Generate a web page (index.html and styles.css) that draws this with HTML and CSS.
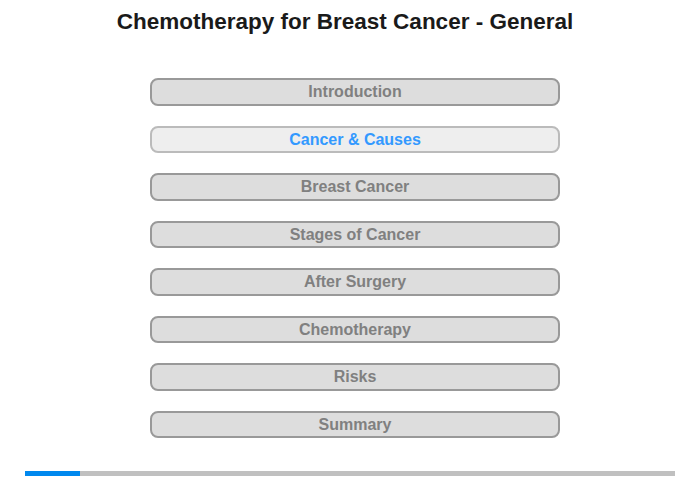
FILE: index.html
```html
<!DOCTYPE html>
<html>
<head>
<meta charset="utf-8">
<link rel="stylesheet" href="styles.css">
</head>
<body>
<div class="page">
  <h1 class="title">Chemotherapy for Breast Cancer - General</h1>
  <nav class="menu">
    <div class="item">Introduction</div>
    <div class="item active">Cancer &amp; Causes</div>
    <div class="item">Breast Cancer</div>
    <div class="item">Stages of Cancer</div>
    <div class="item">After Surgery</div>
    <div class="item">Chemotherapy</div>
    <div class="item">Risks</div>
    <div class="item">Summary</div>
  </nav>
  <div class="progress"><div class="progress-fill"></div></div>
</div>
</body>
</html>
```
FILE: styles.css
```css
html, body {
  margin: 0;
  padding: 0;
  background: #fff;
}
.page {
  width: 700px;
  height: 480px;
  font-family: "Liberation Sans", Arial, sans-serif;
  display: flex;
  flex-direction: column;
  align-items: center;
}
.title {
  margin: 8px 10px 0 0;
  font-size: 22.5px;
  font-weight: bold;
  color: #1a1a1a;
  line-height: 27px;
  text-align: center;
}
.menu {
  margin: 43px 0 0 10px;
  display: flex;
  flex-direction: column;
  gap: 20px;
  width: 410px;
}
.item {
  box-sizing: border-box;
  height: 27.5px;
  border: 2px solid #999;
  border-radius: 8px;
  background: #ddd;
  color: #808080;
  font-size: 16px;
  font-weight: bold;
  text-align: center;
  line-height: 23px;
}
.item.active {
  background: #eee;
  border-color: #bbb;
  color: #3399ff;
}
.progress {
  margin-top: 33px;
  width: 650px;
  height: 5px;
  background: #c0c0c0;
}
.progress-fill {
  width: 55px;
  height: 5px;
  background: #0088ee;
}
```
